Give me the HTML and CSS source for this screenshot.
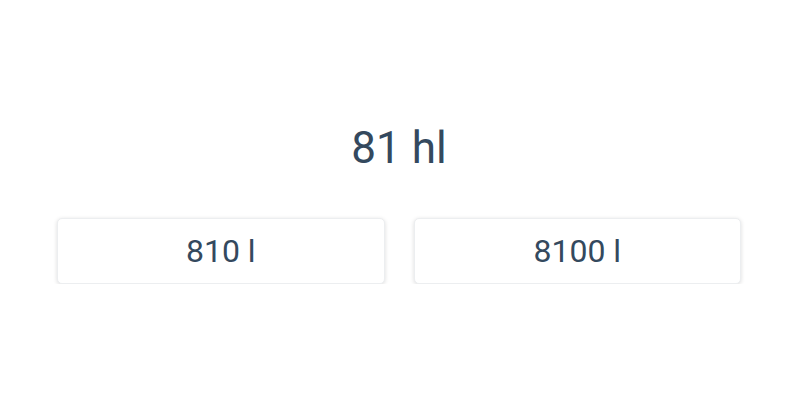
FILE: index.html
```html
<!DOCTYPE html>
<html lang="de">
<head>
  <meta charset="UTF-8" />
  <title>Umrechnung</title>
  <meta name="viewport" content="width=device-width, initial-scale=1" />
  <link rel="stylesheet" href="styles.css">
</head>
<body>
  <div class="quiz">
    <h1 class="question">81 hl</h1>
    <div class="answers">
      <button type="button" class="answer">810 l</button>
      <button type="button" class="answer">8100 l</button>
    </div>
  </div>
</body>
</html>
```

FILE: styles.css
```css
body {
  margin: 0;
  background: #fff;
  font-family: Roboto, 'Noto Sans', sans-serif;
  color: #34495e;
}
.quiz {
  padding: 122px 59px 0 57px;
}
.question {
  margin: 0 0 44px;
  font-size: 44px;
  line-height: 52px;
  font-weight: 400;
  text-align: center;
}
.answers {
  display: grid;
  grid-template-columns: 1fr 1fr;
  gap: 29px;
}
.answer {
  height: 66px;
  display: flex;
  align-items: center;
  justify-content: center;
  background: #fff;
  border: 1px solid #eceef0;
  border-radius: 5px;
  box-shadow: 0 1px 4px rgba(0, 0, 0, 0.14);
  font-family: inherit;
  font-size: 32px;
  color: #34495e;
  cursor: pointer;
  padding: 0;
}
```
